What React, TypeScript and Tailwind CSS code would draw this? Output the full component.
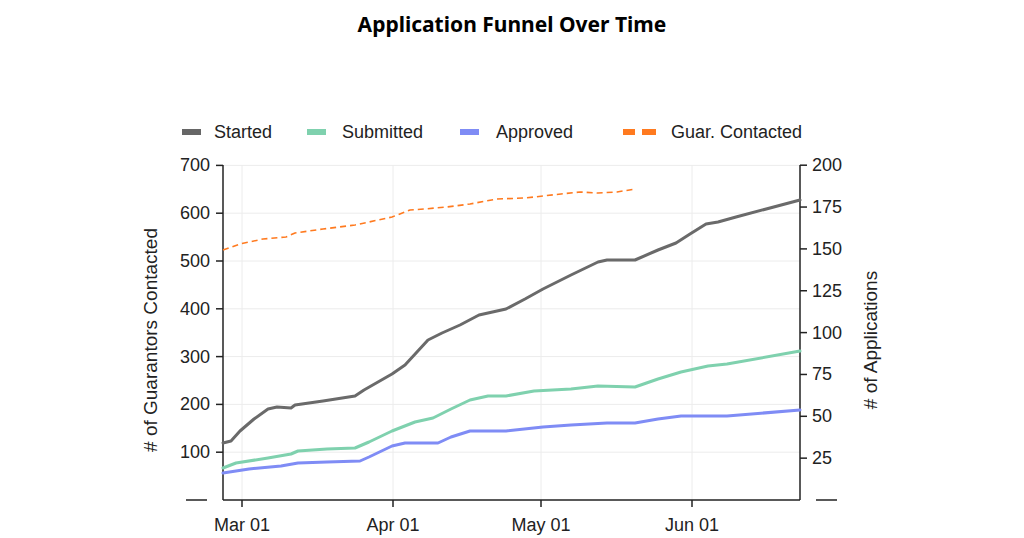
const toPath = (pts: number[][]) => pts.map((p, i) => `${i ? "L" : "M"}${p[0]},${p[1]}`).join(" ");

const started = [[223,443],[231,441],[240,431],[254,419],[268,409],[277,407],[291,408],[295,405],[323,401],[355,396],[364,390],[392,374],[405,365],[428,340],[442,333],[460,325],[479,315],[506,309],[525,299],[543,289],[571,275],[598,262],[607,260],[635,260],[658,250],[676,243],[690,234],[706,224],[718,222],[736,217],[800,200]];
const submitted = [[223,468],[236,463],[268,458],[291,454],[298,451],[327,449],[355,448],[369,442],[392,431],[415,422],[433,418],[451,409],[470,400],[488,396],[506,396],[534,391],[571,389],[598,386],[635,387],[658,379],[681,372],[708,366],[727,364],[800,351]];
const approved = [[223,473],[249,469],[281,466],[298,463],[327,462],[360,461],[369,457],[392,446],[405,443],[438,443],[451,437],[470,431],[488,431],[506,431],[543,427],[571,425],[607,423],[635,423],[658,419],[681,416],[708,416],[727,416],[800,410]];
const contacted = [[223,250],[240,244],[263,239],[286,237],[295,233],[323,229],[355,225],[369,222],[392,217],[410,210],[424,209],[447,207],[470,204],[497,199],[525,198],[543,196],[561,194],[580,192],[598,193],[617,192],[635,189]];

const leftTicks = [700, 600, 500, 400, 300, 200, 100];
const rightTicks = [200, 175, 150, 125, 100, 75, 50, 25];
const months = [["Mar 01", 242], ["Apr 01", 393], ["May 01", 541], ["Jun 01", 692]] as const;

export default function App() {
  const ly = (v: number) => 500 - v * 0.478;
  const ry = (v: number) => 500 - v * 1.674;
  return (
    <div className="w-[1024px] h-[538px] bg-white flex flex-col items-center overflow-hidden">
      <h1 className="mt-[9px] h-[31px] text-[21px] font-bold text-black font-['Lato',sans-serif]">
        Application Funnel Over Time
      </h1>
      <svg width="1024" height="498" viewBox="0 40 1024 498" fontFamily="'Liberation Sans', Arial, sans-serif">
        {/* legend */}
        <g fontSize="18" fill="#222">
          <line x1="182" y1="132" x2="201" y2="132" stroke="#666" strokeWidth="6" />
          <text x="214" y="138">Started</text>
          <line x1="307" y1="132" x2="326" y2="132" stroke="#7fd1ae" strokeWidth="6" />
          <text x="342" y="138">Submitted</text>
          <line x1="460" y1="132" x2="479" y2="132" stroke="#7f8cf5" strokeWidth="6" />
          <text x="496" y="138">Approved</text>
          <line x1="623" y1="132" x2="635" y2="132" stroke="#ff7a1f" strokeWidth="6" />
          <line x1="642" y1="132" x2="656" y2="132" stroke="#ff7a1f" strokeWidth="6" />
          <text x="671" y="138">Guar. Contacted</text>
        </g>
        {/* grid */}
        <g stroke="#ececec" strokeWidth="1">
          {leftTicks.map((v) => <line key={v} x1="223" x2="800" y1={ly(v)} y2={ly(v)} />)}
          {months.map(([m, x]) => <line key={m} x1={x} x2={x} y1="165" y2="500" />)}
        </g>
        {/* axes */}
        <g stroke="#222" strokeWidth="1.5">
          <line x1="223" y1="165" x2="223" y2="500" />
          <line x1="800" y1="165" x2="800" y2="500" />
          <line x1="223" y1="500" x2="800" y2="500" />
          <line x1="186" y1="500" x2="207" y2="500" />
          <line x1="816" y1="500" x2="837" y2="500" />
          {leftTicks.map((v) => <line key={v} x1="216" x2="223" y1={ly(v)} y2={ly(v)} />)}
          {rightTicks.map((v) => <line key={v} x1="800" x2="807" y1={ry(v)} y2={ry(v)} />)}
          {months.map(([m, x]) => <line key={m} x1={x} x2={x} y1="500" y2="507" />)}
        </g>
        <g fontSize="18" fill="#222">
          {leftTicks.map((v) => <text key={v} x="210" y={ly(v) + 6} textAnchor="end">{v}</text>)}
          {rightTicks.map((v) => <text key={v} x="812" y={ry(v) + 6}>{v}</text>)}
          {months.map(([m, x]) => <text key={m} x={x} y="531" textAnchor="middle">{m}</text>)}
          <text transform="translate(157,340) rotate(-90)" textAnchor="middle" fontSize="19">
            # of Guarantors Contacted
          </text>
          <text transform="translate(877,340) rotate(-90)" textAnchor="middle" fontSize="19">
            # of Applications
          </text>
        </g>
        {/* series */}
        <g fill="none" strokeWidth="3" strokeLinejoin="round" strokeLinecap="round">
          <path d={toPath(started)} stroke="#6a6a6a" />
          <path d={toPath(submitted)} stroke="#7fd1ae" />
          <path d={toPath(approved)} stroke="#7f8cf5" />
          <path d={toPath(contacted)} stroke="#ff7a1f" strokeWidth="1.6" strokeDasharray="6 4" strokeLinecap="butt" />
        </g>
      </svg>
    </div>
  );
}
